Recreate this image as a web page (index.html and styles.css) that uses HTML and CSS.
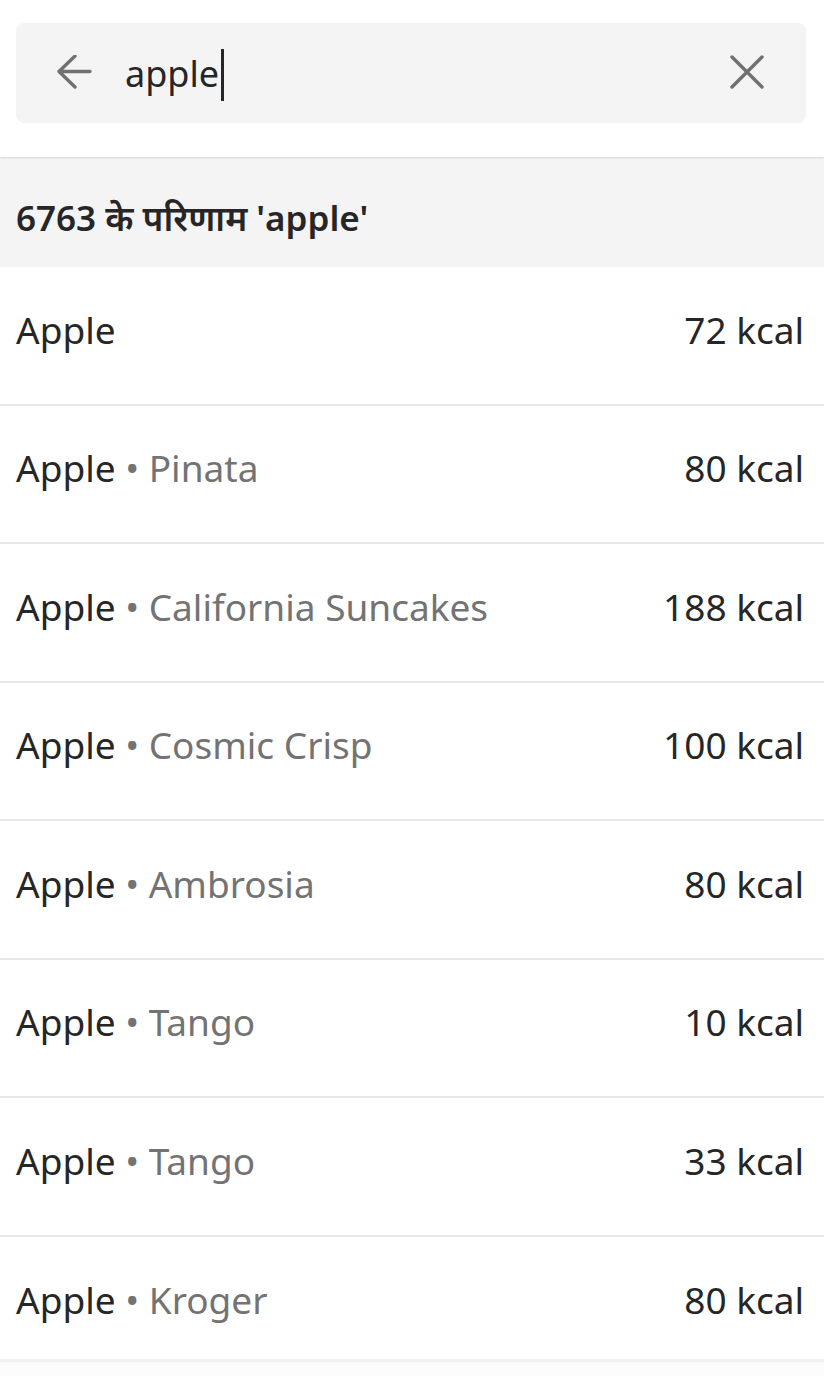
FILE: index.html
```html
<!DOCTYPE html>
<html>
  <head>
    <meta charset="utf-8">
    <meta name="viewport" content="width=device-width">
    <link rel="stylesheet" href="styles.css">
  </head>
  <body>
    <div class="search-wrap">
      <div class="search">
        <svg class="icon" viewBox="0 0 36 36" width="36" height="36">
          <path d="M34 16.5H3M19 1L3 16.5 19 32" fill="none" stroke="#707070" stroke-width="3.4" stroke-linecap="round" stroke-linejoin="round"/>
        </svg>
        <div class="query">apple<span class="caret"></span></div>
        <svg class="icon" viewBox="0 0 36 36" width="36" height="36">
          <path d="M3 2L33 32M33 2L3 32" fill="none" stroke="#707070" stroke-width="3.4" stroke-linecap="round"/>
        </svg>
      </div>
    </div>

    <div class="results-head">6763 के परिणाम 'apple'</div>

    <ul class="results">
      <li class="row"><span class="name">Apple</span><span class="kcal">72 kcal</span></li>
      <li class="row"><span class="name">Apple<span class="brand"> • Pinata</span></span><span class="kcal">80 kcal</span></li>
      <li class="row"><span class="name">Apple<span class="brand"> • California Suncakes</span></span><span class="kcal">188 kcal</span></li>
      <li class="row"><span class="name">Apple<span class="brand"> • Cosmic Crisp</span></span><span class="kcal">100 kcal</span></li>
      <li class="row"><span class="name">Apple<span class="brand"> • Ambrosia</span></span><span class="kcal">80 kcal</span></li>
      <li class="row"><span class="name">Apple<span class="brand"> • Tango</span></span><span class="kcal">10 kcal</span></li>
      <li class="row"><span class="name">Apple<span class="brand"> • Tango</span></span><span class="kcal">33 kcal</span></li>
      <li class="row"><span class="name">Apple<span class="brand"> • Kroger</span></span><span class="kcal">80 kcal</span></li>
    </ul>
    <div class="bottom"></div>
  </body>
</html>
```

FILE: styles.css
```css
html, body {
  margin: 0;
  height: 100%;
  overflow: hidden;
  background: #fff;
  font-family: "Noto Sans", "Open Sans", sans-serif;
  color: #262626;
}

.search-wrap {
  padding: 23px 18px 34px 16px;
  box-shadow: 0 1px 2px rgba(0, 0, 0, 0.12);
  position: relative;
}

.search {
  display: flex;
  align-items: center;
  height: 100px;
  padding: 0 41px 0 40px;
  background: #f4f4f4;
  border-radius: 8px;
}

.search .icon {
  flex: none;
}

.query {
  flex: 1;
  display: flex;
  align-items: center;
  margin-left: 33px;
  font-size: 36px;
  color: #262626;
}

.caret {
  display: inline-block;
  width: 3px;
  height: 52px;
  margin-left: 2px;
  margin-top: 4px;
  background: #262626;
}

.results-head {
  box-sizing: border-box;
  display: flex;
  align-items: center;
  height: 110px;
  padding: 10px 16px 0;
  background: #f4f4f4;
  font-size: 35px;
  font-weight: 600;
  color: #262626;
}

.results {
  list-style: none;
  margin: 0;
  padding: 0;
}

.row {
  box-sizing: border-box;
  display: flex;
  justify-content: space-between;
  align-items: center;
  height: 138.5px;
  padding: 0 20px 12px 16px;
  border-bottom: 2px solid #e8e8e8;
  font-size: 37px;
}

.row:last-child {
  height: 125px;
  padding-top: 4px;
  padding-bottom: 0;
  border-bottom: 3px solid #f0f0f0;
}

.brand {
  color: #737373;
}

.bottom {
  height: 40px;
  background: #fcfcfc;
}
```
